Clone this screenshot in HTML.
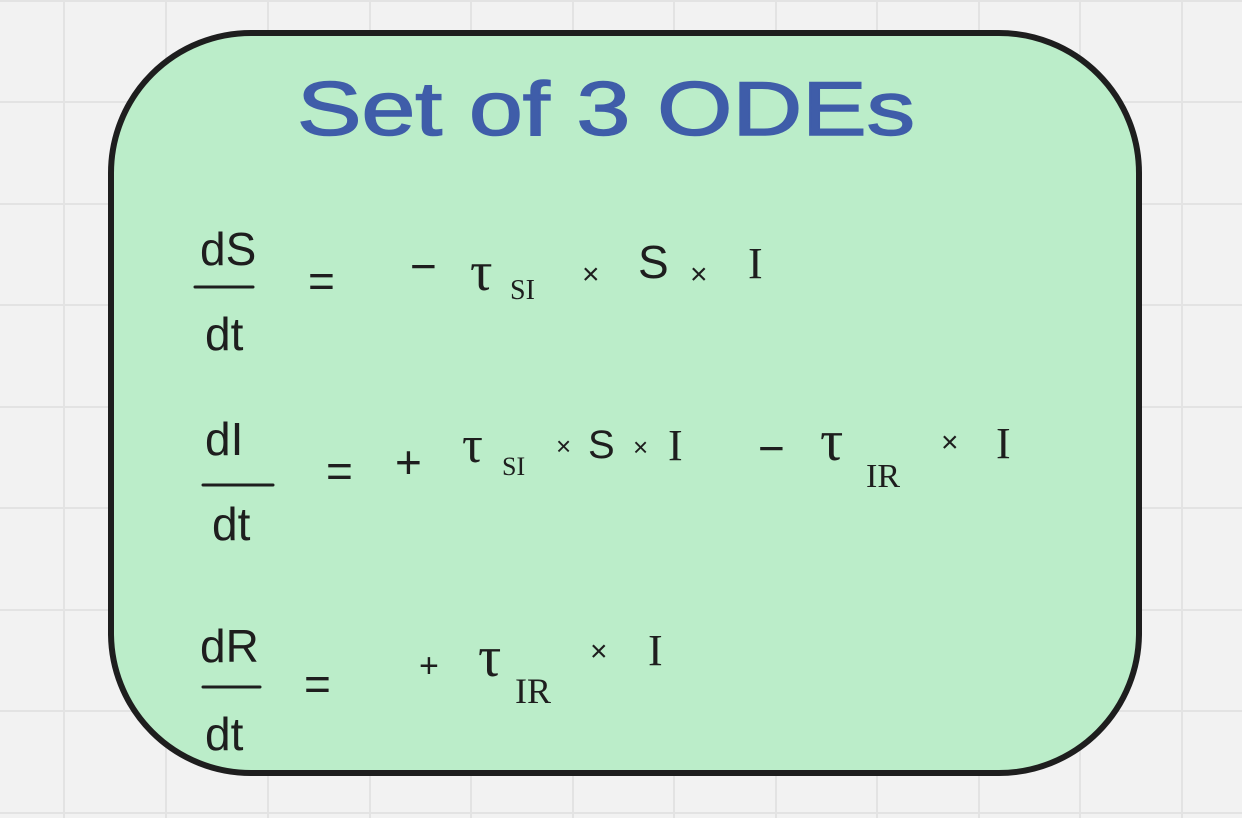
<!DOCTYPE html>
<html><head><meta charset="utf-8"><style>
html,body{margin:0;padding:0;background:#f2f2f2;}
svg{display:block}
text{font-family:"Liberation Sans",sans-serif;fill:#1e1e1e;}
.s{font-family:"Liberation Serif",serif;}
</style></head><body>
<svg width="1242" height="818" viewBox="0 0 1242 818" xmlns="http://www.w3.org/2000/svg">
<rect width="1242" height="818" fill="#f2f2f2"/>
<g stroke="#e3e3e3" stroke-width="2">
<line x1="64" y1="0" x2="64" y2="818"/><line x1="166" y1="0" x2="166" y2="818"/><line x1="268" y1="0" x2="268" y2="818"/><line x1="370" y1="0" x2="370" y2="818"/><line x1="471" y1="0" x2="471" y2="818"/><line x1="573" y1="0" x2="573" y2="818"/><line x1="674" y1="0" x2="674" y2="818"/><line x1="776" y1="0" x2="776" y2="818"/><line x1="877" y1="0" x2="877" y2="818"/><line x1="979" y1="0" x2="979" y2="818"/><line x1="1080" y1="0" x2="1080" y2="818"/><line x1="1182" y1="0" x2="1182" y2="818"/>
<line x1="0" y1="1" x2="1242" y2="1"/><line x1="0" y1="102" x2="1242" y2="102"/><line x1="0" y1="204" x2="1242" y2="204"/><line x1="0" y1="305" x2="1242" y2="305"/><line x1="0" y1="407" x2="1242" y2="407"/><line x1="0" y1="508" x2="1242" y2="508"/><line x1="0" y1="610" x2="1242" y2="610"/><line x1="0" y1="711" x2="1242" y2="711"/><line x1="0" y1="813" x2="1242" y2="813"/>
</g>
<rect x="111" y="33" width="1028" height="740" rx="140" ry="140" fill="#bbedc9" stroke="#1e1e1e" stroke-width="6"/>
<text x="297" y="135" font-size="76" textLength="618" lengthAdjust="spacingAndGlyphs" style="fill:#3f5da9;stroke:#3f5da9;stroke-width:1.5">Set of 3 ODEs</text>
<g stroke="#1e1e1e" stroke-width="3" stroke-linecap="round">
<line x1="195" y1="287" x2="253" y2="287"/>
<line x1="203" y1="485" x2="273" y2="485"/>
<line x1="203" y1="687" x2="260" y2="687"/>
</g>
<g font-size="46">
<text x="200" y="265">dS</text>
<text x="205" y="350">dt</text>
<text x="308" y="297">=</text>
<text x="410" y="282">−</text>
<text class="s" x="470" y="290" font-size="56">τ</text>
<text class="s" x="510" y="299" font-size="28">SI</text>
<text x="582" y="284" font-size="30">×</text>
<text x="638" y="278">S</text>
<text x="690" y="284" font-size="30">×</text>
<text class="s" x="748" y="278" font-size="44">I</text>

<text x="205" y="455">dI</text>
<text x="212" y="540">dt</text>
<text x="326" y="487">=</text>
<text x="395" y="478">+</text>
<text class="s" x="462" y="462" font-size="52">τ</text>
<text class="s" x="502" y="475" font-size="26">SI</text>
<text x="556" y="455" font-size="26">×</text>
<text x="588" y="458" font-size="40">S</text>
<text x="633" y="456" font-size="26">×</text>
<text class="s" x="668" y="460" font-size="44">I</text>
<text x="758" y="464">−</text>
<text class="s" x="820" y="460" font-size="58">τ</text>
<text class="s" x="866" y="487" font-size="34">IR</text>
<text x="941" y="452" font-size="30">×</text>
<text class="s" x="996" y="458" font-size="44">I</text>

<text x="200" y="662">dR</text>
<text x="205" y="750">dt</text>
<text x="304" y="700">=</text>
<text x="419" y="677" font-size="34">+</text>
<text class="s" x="478" y="676" font-size="58">τ</text>
<text class="s" x="515" y="703" font-size="36">IR</text>
<text x="590" y="661" font-size="30">×</text>
<text class="s" x="648" y="665" font-size="44">I</text>
</g>
</svg>
</body></html>
